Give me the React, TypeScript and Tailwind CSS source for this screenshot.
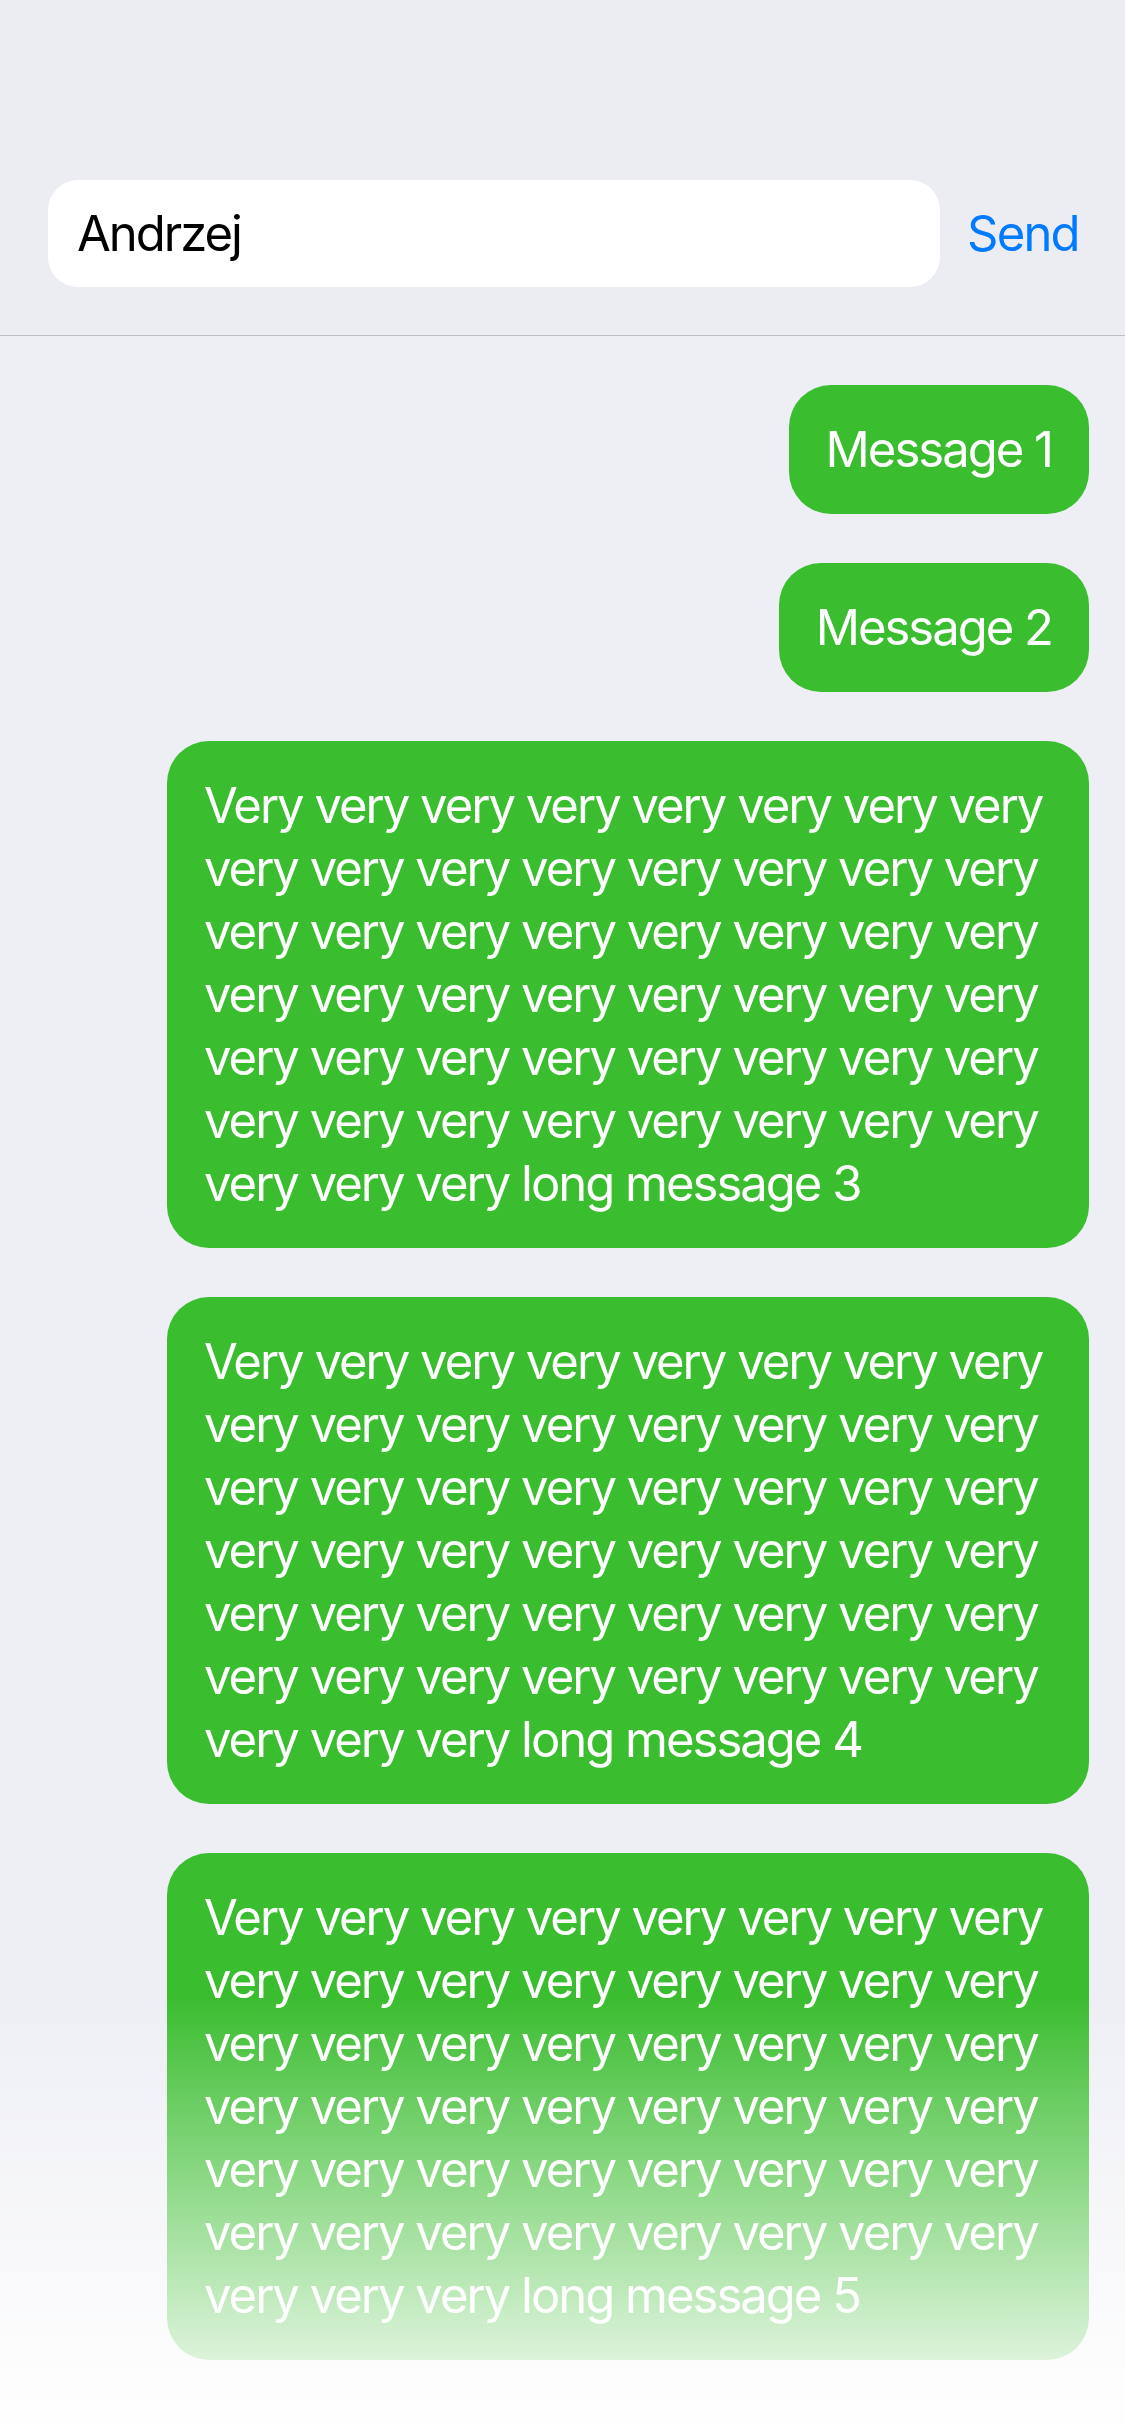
import React, { useState } from 'react';

const longText = (n: number) => 'Very ' + Array(50).fill('very').join(' ') + ' long message ' + n;

const messages = ['Message 1', 'Message 2', longText(3), longText(4), longText(5)];

const App: React.FC = () => {
  const [name, setName] = useState('Andrzej');

  return (
    <div className="relative h-[2436px] overflow-hidden bg-[#eeeff4] font-['Inter','Noto_Sans',sans-serif] antialiased">
      {/* Header with input */}
      <div className="flex items-center border-b border-[#bdbdc2] bg-[#ecedf2] pt-[180px] pb-[48px] pl-[48px]">
        <input
          value={name}
          onChange={(e) => setName(e.target.value)}
          className="h-[107px] w-[892px] rounded-[30px] bg-white pl-[29px] text-[49px] tracking-[-2px] text-black outline-none"
        />
        <button className="ml-[27px] text-[49px] tracking-[-1.8px] text-[#007aff]">Send</button>
      </div>

      {/* Messages */}
      <div className="flex flex-col items-end gap-[49px] pt-[49px] pr-[36px]">
        {messages.map((msg, i) => (
          <div
            key={i}
            className="max-w-[922px] rounded-[42px] bg-[#3bbd30] px-[37px] py-[33px] text-[49px] leading-[63px] tracking-[-2px] text-white"
          >
            {msg}
          </div>
        ))}
      </div>

      {/* Bottom fade */}
      <div className="pointer-events-none absolute inset-x-0 bottom-0 h-[440px] bg-gradient-to-b from-white/0 to-white" />
    </div>
  );
};

export default App;
